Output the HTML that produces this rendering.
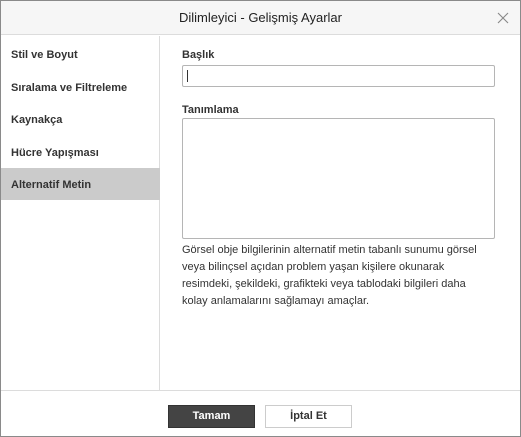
<!DOCTYPE html>
<html><head><style>
*{margin:0;padding:0;box-sizing:border-box}
body{width:521px;height:437px;overflow:hidden;font-family:"Liberation Sans",sans-serif;background:#fff;position:relative}
.frame{position:absolute;left:0;top:0;width:521px;height:437px;border:1px solid #8a8a8a}
.hdr{position:absolute;left:1px;top:1px;width:519px;height:34px;background:#f6f6f6;border-bottom:1px solid #dcdcdc;text-align:center;line-height:34px;font-size:13px;color:#222}
.x{position:absolute;right:11px;top:11px;width:12px;height:12px}
.side{position:absolute;left:1px;top:36px;width:159px;height:354px;border-right:1px solid #dcdcdc}
.it{position:absolute;left:10px;font-size:11px;font-weight:bold;color:#333}
.act{position:absolute;left:0;top:132px;width:159px;height:32px;background:#cbcbcb}
.lbl{position:absolute;left:182px;font-size:11px;font-weight:bold;color:#333}
.inp{position:absolute;left:182px;width:313px;border:1px solid #b5b5b5;border-radius:2px;background:#fff}
.p{position:absolute;left:182px;top:242px;width:312px;font-size:11px;line-height:17px;color:#333}
.foot{position:absolute;left:1px;top:390px;width:519px;border-top:1px solid #dcdcdc}
.btn{position:absolute;top:405px;width:87px;height:23px;font-size:11px;font-weight:bold;text-align:center;line-height:21px}
</style></head><body>
<div class="frame"></div>
<div class="hdr">Dilimleyici - Gelişmiş Ayarlar
<svg class="x" viewBox="0 0 12 12"><path d="M1 1L11 11M11 1L1 11" stroke="#888" stroke-width="1.1"/></svg></div>
<div class="side">
<div class="act"></div>
<div class="it" style="top:13px">Stil ve Boyut</div>
<div class="it" style="top:46px">Sıralama ve Filtreleme</div>
<div class="it" style="top:78px">Kaynakça</div>
<div class="it" style="top:111px">Hücre Yapışması</div>
<div class="it" style="top:143px">Alternatif Metin</div>
</div>
<div class="lbl" style="top:49px">Başlık</div>
<div class="inp" style="top:65px;height:22px"><div style="position:absolute;left:4px;top:4px;width:1px;height:12px;background:#333"></div></div>
<div class="lbl" style="top:104px">Tanımlama</div>
<div class="inp" style="top:118px;height:121px"></div>
<div class="p">Görsel obje bilgilerinin alternatif metin tabanlı sunumu görsel<br>veya bilinçsel açıdan problem yaşan kişilere okunarak<br>resimdeki, şekildeki, grafikteki veya tablodaki bilgileri daha<br>kolay anlamalarını sağlamayı amaçlar.</div>
<div class="foot"></div>
<div class="btn" style="left:168px;background:#444;color:#fff;border:1px solid #333">Tamam</div>
<div class="btn" style="left:265px;background:#fff;color:#333;border:1px solid #ccc">İptal Et</div>
</body></html>
